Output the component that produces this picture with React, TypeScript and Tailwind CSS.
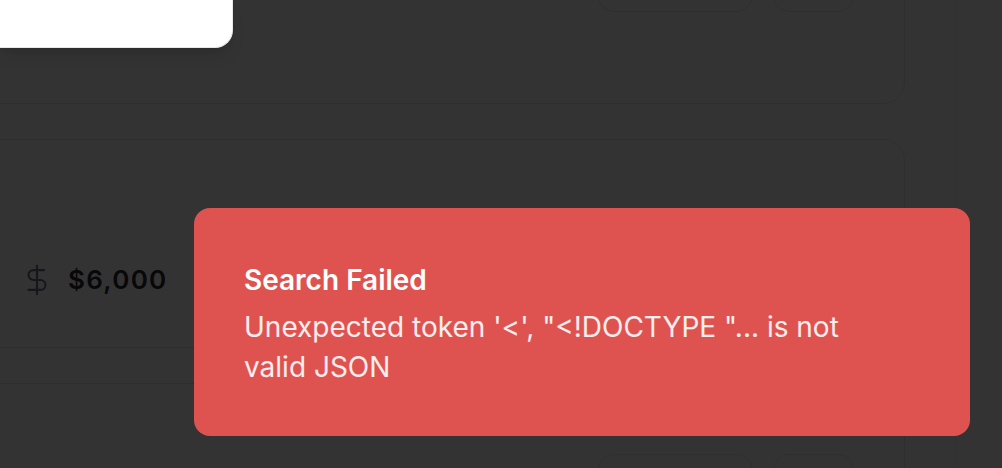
import { DollarSign } from "lucide-react";

function DealCard({ price }: { price?: string }) {
  return (
    <div className="-ml-[24px] h-[209px] shrink-0 rounded-[22px] border border-gray-200 bg-white flex justify-between">
      <div className="pl-[43px] pt-[120px]">
        {price && (
          <div className="flex items-center gap-[14px]">
            <DollarSign size={34} strokeWidth={1.5} className="text-gray-500" />
            <span className="text-[26px] font-semibold tracking-wider text-[#2a2a2a]">{price}</span>
          </div>
        )}
      </div>
      <div className="pr-[50px] pt-[70px] flex gap-[20px]">
        <button className="w-[155px] h-[46px] rounded-2xl border border-gray-200 bg-white" />
        <button className="w-[81px] h-[46px] rounded-2xl border border-gray-200 bg-white" />
      </div>
    </div>
  );
}

export default function App() {
  return (
    <div className="relative w-[1002px] h-[468px] overflow-hidden bg-white font-['Inter',sans-serif]">
      <div className="flex h-full">
        <div className="w-[955px] -mt-[105px] flex flex-col gap-[35px] pr-[50px]">
          <DealCard />
          <DealCard price="$6,000" />
          <DealCard />
        </div>
        <div className="flex-1 border-l border-gray-100" />
      </div>

      {/* dim overlay */}
      <div className="absolute inset-0 bg-black/80" />

      {/* dialog edge peeking in */}
      <div className="absolute left-0 top-0 w-[233px] h-[48px] bg-white rounded-br-[18px] border-b border-r border-gray-200 shadow-lg" />

      {/* toast */}
      <div className="absolute left-[194px] top-[208px] w-[776px] h-[228px] rounded-2xl bg-[#de5350] pl-[50px] pt-[54px]">
        <div className="text-[28px] leading-[36px] font-semibold text-white">Search Failed</div>
        <div className="mt-[9px] max-w-[610px] text-[28px] leading-[40px] text-white/90">
          Unexpected token '&lt;', "&lt;!DOCTYPE "... is not valid JSON
        </div>
      </div>
    </div>
  );
}
